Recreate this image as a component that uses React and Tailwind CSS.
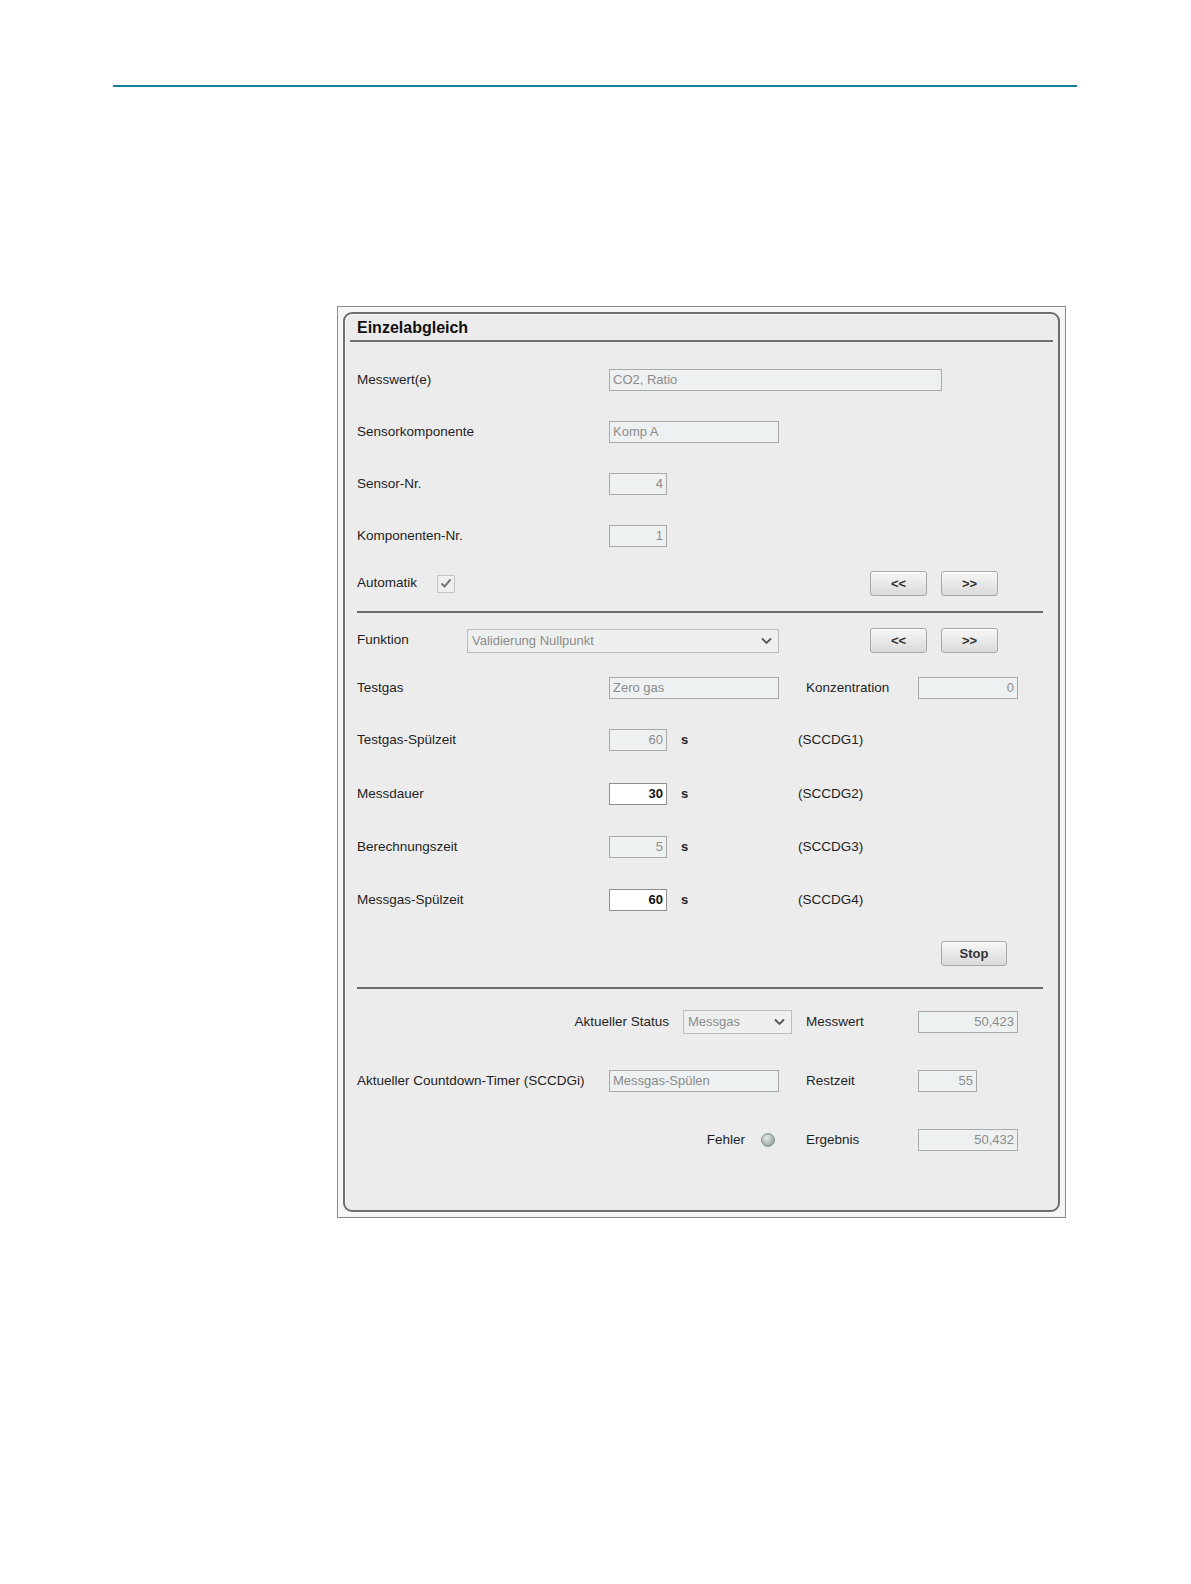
import React from "react";

const font = { fontFamily: '"Liberation Sans", Arial, sans-serif' };

function Field({ w, value, enabled = false, align = "left" }) {
  return (
    <div
      className={`h-[22px] ${w} flex items-center px-[3px] text-[13px] border ${
        enabled
          ? "bg-white border-[#8f8f8f] text-[#111] font-bold"
          : "bg-[#eef1f2] border-[#a9a9a9] text-[#8c8c8c]"
      } ${align === "right" ? "justify-end" : "justify-start"}`}
    >
      {value}
    </div>
  );
}

function Select({ w, value }) {
  return (
    <div
      className={`h-[24px] ${w} flex items-center justify-between pl-[4px] pr-[6px] text-[13px] border border-[#bdbdbd] bg-[#eef0f0] text-[#8c8c8c]`}
    >
      <span>{value}</span>
      <svg width="11" height="8" viewBox="0 0 11 8">
        <path d="M1 1.5 L5.5 6 L10 1.5" fill="none" stroke="#555" strokeWidth="1.8" />
      </svg>
    </div>
  );
}

function Btn({ children, w = "w-[57px]" }) {
  return (
    <div
      className={`h-[25px] ${w} flex items-center justify-center rounded-[3px] border border-[#a8a8a8] bg-gradient-to-b from-[#f7f7f7] to-[#dadada] text-[13px] text-[#333] font-bold shadow-[inset_0_1px_0_#fff]`}
    >
      {children}
    </div>
  );
}

function Label({ w, children, right = false }) {
  return (
    <div className={`${w} shrink-0 text-[13.5px] text-[#1e1e1e] ${right ? "text-right" : ""}`}>
      {children}
    </div>
  );
}

function SRow({ label, value, enabled, code, mt }) {
  return (
    <div className={`flex items-center h-[22px] ${mt}`}>
      <Label w="w-[252px]">{label}</Label>
      <Field w="w-[58px]" value={value} enabled={enabled} align="right" />
      <div className="w-[14px]" />
      <div className="w-[117px] shrink-0 text-[13px] text-[#222] font-bold">s</div>
      <div className="text-[13.5px] text-[#1e1e1e]">{code}</div>
    </div>
  );
}

export default function App() {
  return (
    <div className="bg-white w-full h-[1500px] overflow-hidden" style={font}>
      <div className="pt-[85px] pl-[113px]">
        <div className="w-[964px] h-[2px] bg-[#1b7ea1]" />
      </div>
      <div className="ml-[337px] mt-[219px] w-[729px] h-[912px] border border-[#8a8a8a] bg-[#f6f6f6] p-[5px]">
        <div className="w-full h-full rounded-[9px] border-2 border-[#6f6f6f] bg-[#ececec] pl-[12px] pr-[5px] shadow-[inset_1px_1px_0_#fafafa]">
          {/* title */}
          <div className="h-[24px] flex items-end">
            <div className="text-[16px] font-bold text-[#111] leading-none pb-[2px]">Einzelabgleich</div>
          </div>
          <div className="-ml-[7px] h-[2px] w-[703px] bg-[#707070] mt-[2px]" />

          {/* Messwert(e) */}
          <div className="flex items-center h-[22px] mt-[27px]">
            <Label w="w-[252px]">Messwert(e)</Label>
            <Field w="w-[333px]" value="CO2, Ratio" />
          </div>
          <div className="flex items-center h-[22px] mt-[30px]">
            <Label w="w-[252px]">Sensorkomponente</Label>
            <Field w="w-[170px]" value="Komp A" />
          </div>
          <div className="flex items-center h-[22px] mt-[30px]">
            <Label w="w-[252px]">Sensor-Nr.</Label>
            <Field w="w-[58px]" value="4" align="right" />
          </div>
          <div className="flex items-center h-[22px] mt-[30px]">
            <Label w="w-[252px]">Komponenten-Nr.</Label>
            <Field w="w-[58px]" value="1" align="right" />
          </div>
          <div className="flex items-center h-[25px] mt-[24px]">
            <Label w="w-[80px]">Automatik</Label>
            <div className="w-[18px] h-[18px] border border-[#c4c4c4] bg-[#eef0f0] flex items-center justify-center">
              <svg width="12" height="11" viewBox="0 0 12 11">
                <path d="M1.5 5.5 L4.5 8.5 L10.5 1.5" fill="none" stroke="#777" strokeWidth="2" />
              </svg>
            </div>
            <div className="w-[415px]" />
            <Btn>&lt;&lt;</Btn>
            <div className="w-[14px]" />
            <Btn>&gt;&gt;</Btn>
          </div>
          <div className="h-[2px] w-[686px] bg-[#6a6a6a] mt-[15px]" />

          {/* Funktion */}
          <div className="flex items-center h-[25px] mt-[15px]">
            <Label w="w-[110px]">Funktion</Label>
            <Select w="w-[312px]" value="Validierung Nullpunkt" />
            <div className="w-[91px]" />
            <Btn>&lt;&lt;</Btn>
            <div className="w-[14px]" />
            <Btn>&gt;&gt;</Btn>
          </div>
          <div className="flex items-center h-[22px] mt-[24px]">
            <Label w="w-[252px]">Testgas</Label>
            <Field w="w-[170px]" value="Zero gas" />
            <div className="w-[27px]" />
            <Label w="w-[112px]">Konzentration</Label>
            <Field w="w-[100px]" value="0" align="right" />
          </div>
          <SRow label="Testgas-Spülzeit" value="60" code="(SCCDG1)" mt="mt-[30px]" />
          <SRow label="Messdauer" value="30" enabled code="(SCCDG2)" mt="mt-[32px]" />
          <SRow label="Berechnungszeit" value="5" code="(SCCDG3)" mt="mt-[31px]" />
          <SRow label="Messgas-Spülzeit" value="60" enabled code="(SCCDG4)" mt="mt-[31px]" />
          <div className="flex items-center h-[25px] mt-[30px]">
            <div className="w-[584px]" />
            <Btn w="w-[66px]">Stop</Btn>
          </div>
          <div className="h-[2px] w-[686px] bg-[#6a6a6a] mt-[21px]" />

          {/* Status */}
          <div className="flex items-center h-[24px] mt-[21px]">
            <Label w="w-[312px]" right>Aktueller Status</Label>
            <div className="w-[14px]" />
            <Select w="w-[109px]" value="Messgas" />
            <div className="w-[14px]" />
            <Label w="w-[112px]">Messwert</Label>
            <Field w="w-[100px]" value="50,423" align="right" />
          </div>
          <div className="flex items-center h-[22px] mt-[36px]">
            <Label w="w-[252px]">Aktueller Countdown-Timer (SCCDGi)</Label>
            <Field w="w-[170px]" value="Messgas-Spülen" />
            <div className="w-[27px]" />
            <Label w="w-[112px]">Restzeit</Label>
            <Field w="w-[59px]" value="55" align="right" />
          </div>
          <div className="flex items-center h-[22px] mt-[37px]">
            <Label w="w-[388px]" right>Fehler</Label>
            <div className="w-[16px]" />
            <div className="w-[14px] h-[14px] rounded-full border border-[#8a958f] bg-[radial-gradient(circle_at_40%_35%,#e4eee8_0%,#aab8b0_55%,#7d8a83_100%)]" />
            <div className="w-[31px]" />
            <Label w="w-[112px]">Ergebnis</Label>
            <Field w="w-[100px]" value="50,432" align="right" />
          </div>
        </div>
      </div>
    </div>
  );
}
